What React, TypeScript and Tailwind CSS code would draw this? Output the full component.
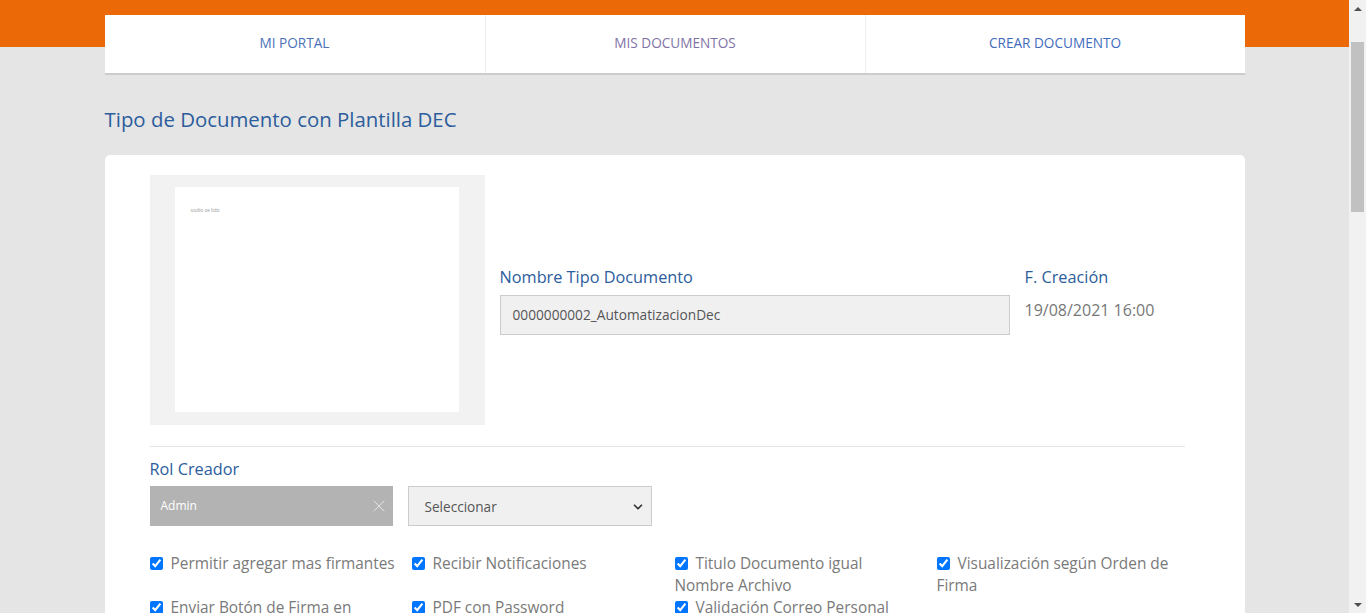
import { ChevronDown, X } from "lucide-react";

const tabs = [
  { label: "MI PORTAL", color: "text-[#4a72b8]" },
  { label: "MIS DOCUMENTOS", color: "text-[#7f73a6]" },
  { label: "CREAR DOCUMENTO", color: "text-[#3f6cbd]" },
];

const options = [
  "Permitir agregar mas firmantes",
  "Recibir Notificaciones",
  "Titulo Documento igual Nombre Archivo",
  "Visualización según Orden de Firma",
  "Enviar Botón de Firma en Notificación",
  "PDF con Password",
  "Validación Correo Personal",
];

export default function App() {
  return (
    <div className="flex h-[613px] overflow-hidden bg-[#e5e5e5] font-['Open_Sans',sans-serif]">
      <div className="min-w-0 flex-1 overflow-hidden bg-[linear-gradient(to_bottom,#ec6907_47px,#e5e5e5_47px)] pt-[15px]">
        <div className="mx-auto w-[1140px]">
          <nav className="grid grid-cols-3 bg-white shadow-[0_2px_0_#cccccc]">
            {tabs.map((t, i) => (
              <a
                key={t.label}
                href="#"
                className={`flex h-[58px] items-center justify-center pb-[2px] text-[13.6px] ${t.color} ${
                  i > 0 ? "border-l border-[#eeeeee]" : ""
                }`}
              >
                {t.label}
              </a>
            ))}
          </nav>

          <h1 className="mt-[31px] text-[20.4px] leading-[30px] text-[#2c5d9c]">
            Tipo de Documento con Plantilla DEC
          </h1>

          <div className="mt-[21px] rounded-[5px] bg-white pb-10 pl-[45px] pr-[60px] pt-5">
            <div className="flex">
              <div className="h-[250px] w-[335px] shrink-0 bg-[#f2f2f2] px-[25px] pt-3">
                <div className="h-[225px] w-[284px] bg-white px-4 pt-5 text-[5px] text-[#999]">
                  sodio se lido
                </div>
              </div>
              <div className="flex flex-1 items-center pl-[15px]">
                <div className="w-[510px]">
                  <div className="text-[16.3px] leading-[22px] text-[#2c5d9c]">Nombre Tipo Documento</div>
                  <div className="mt-[7px] flex h-10 items-center border border-[#cccccc] bg-[#f0f0f0] px-3 pt-[1px] text-[13.7px] text-[#555]">
                    0000000002_AutomatizacionDec
                  </div>
                </div>
                <div className="ml-[15px] self-center pb-[13px]">
                  <div className="text-[16.3px] leading-[22px] text-[#2c5d9c]">F. Creación</div>
                  <div className="mt-[11px] text-[16px] leading-[22px] text-[#777]">19/08/2021 16:00</div>
                </div>
              </div>
            </div>

            <hr className="mt-[21px] border-[#e5e5e5]" />

            <div className="mt-[11px] text-[16.3px] leading-[22px] text-[#2c5d9c]">Rol Creador</div>
            <div className="mt-[6px] flex gap-[15px]">
              <div className="flex h-10 w-[243px] items-center justify-between bg-[#b3b3b3] pl-[11px] pr-[4px] text-[12px] text-white">
                <span>Admin</span>
                <X size={20} strokeWidth={0.9} className="text-[#f3f3f3]" />
              </div>
              <div className="flex h-10 w-[244px] items-center justify-between border border-[#cccccc] bg-[#f0f0f0] pl-4 pr-[6px] pt-[2px] text-[13.6px] text-[#555]">
                <span>Seleccionar</span>
                <ChevronDown size={14} strokeWidth={3} className="text-[#333]" />
              </div>
            </div>

            <div className="mt-[27px] grid grid-cols-[262px_263px_262px_262px]">
              {options.map((o) => (
                <label key={o} className="pr-[14px] text-[15.4px] leading-[22px] text-[#7a7a7a]">
                  <input
                    type="checkbox"
                    checked
                    readOnly
                    className="mr-[8px] h-[13px] w-[13px] align-[-1px] accent-[#0075ff]"
                  />
                  {o}
                </label>
              ))}
            </div>
          </div>
        </div>
      </div>

      <div className="flex w-[17px] shrink-0 flex-col items-center bg-[#f1f1f1]">
        <div className="flex h-[17px] items-center justify-center">
          <div className="h-0 w-0 border-x-[4px] border-b-[4px] border-x-transparent border-b-[#505050]" />
        </div>
        <div className="mt-[25px] h-[170px] w-[13px] bg-[#c1c1c1]" />
        <div className="flex-1" />
        <div className="flex h-[17px] items-center justify-center">
          <div className="h-0 w-0 border-x-[4px] border-t-[4px] border-x-transparent border-t-[#505050]" />
        </div>
      </div>
    </div>
  );
}
